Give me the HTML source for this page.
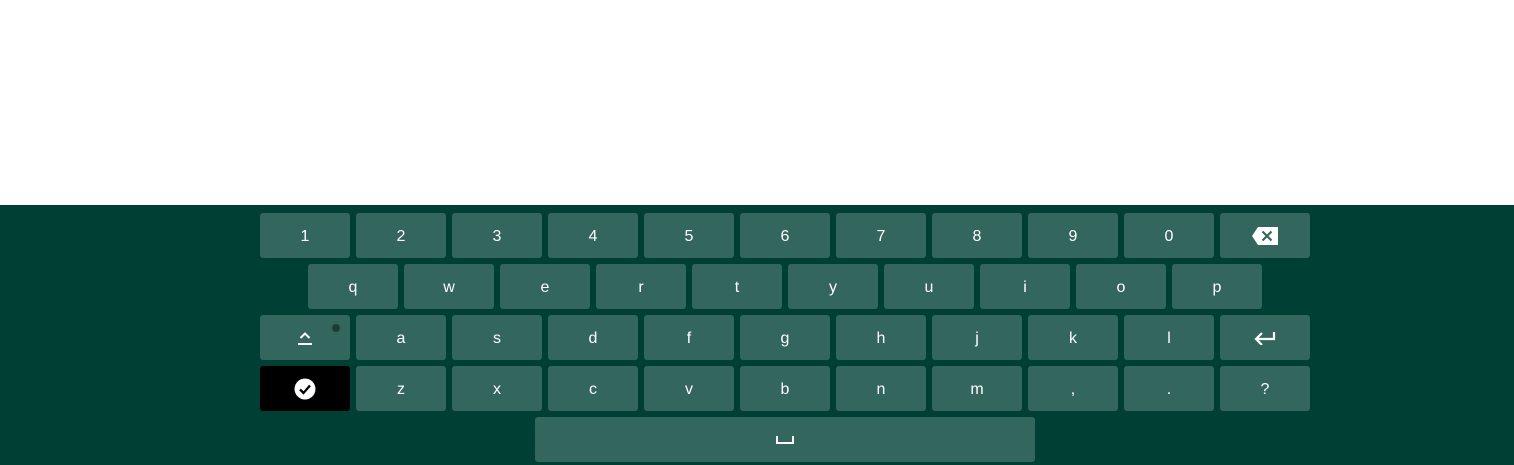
<html><head><style>
body{margin:0;width:1514px;height:465px;background:#fff;position:relative;overflow:hidden;font-family:"Liberation Sans",sans-serif}
#kb{position:absolute;left:0;top:205px;width:1514px;height:260px;background:#003f34}
.k{position:absolute;width:90px;height:45px;box-sizing:border-box;padding-top:2px;background:#33665c;border-radius:3px;color:#fff;font-size:16px;display:flex;align-items:center;justify-content:center}
</style></head><body><div id="kb"></div>
<script>
const rows=[[213,260,"1234567890".split("")],[264,308,"qwertyuiop".split("")],[315,356,"asdfghjkl".split("")],[366,356,"zxcvbnm,.?".split("")]];
let h="";
for(const [y,x0,ks] of rows)ks.forEach((c,i)=>{h+=`<div class="k" style="left:${x0+96*i}px;top:${y}px">${c}</div>`});
document.write(h);
</script>
<div class="k" style="left:1220px;top:213px;padding-top:0"><svg width="26" height="18" viewBox="0 0 26 18"><path d="M6 0H26V18H6L0 9Z" fill="#fff"/><path d="M10.5 4.5l9 9M19.5 4.5l-9 9" stroke="#33665c" stroke-width="2.2"/></svg></div>
<div class="k" style="left:260px;top:315px;padding-top:0"><svg width="16" height="16" viewBox="0 0 16 16"><path d="M3.5 8L8 3.5l4.5 4.5" fill="none" stroke="#fff" stroke-width="2"/><path d="M1 14h14" stroke="#fff" stroke-width="2"/></svg><div style="position:absolute;left:72px;top:9px;width:8px;height:8px;border-radius:50%;background:#1d3a33"></div></div>
<div class="k" style="left:1220px;top:315px;padding-top:0"><svg width="22" height="14" viewBox="0 0 22 14"><path d="M20 1v7H3" fill="none" stroke="#fff" stroke-width="2.2"/><path d="M8 2L2 8l6 6" fill="none" stroke="#fff" stroke-width="2.2"/></svg></div>
<div class="k" style="left:260px;top:366px;background:#000;padding-top:0"><svg width="22" height="22" viewBox="0 0 22 22"><circle cx="11" cy="11" r="10.5" fill="#fff"/><path d="M6 11.5l3.5 3.5L16 7.5" fill="none" stroke="#000" stroke-width="2.3"/></svg></div>
<div class="k" style="left:535px;top:417px;width:500px;padding-top:0"><svg width="18" height="8" viewBox="0 0 18 8"><path d="M1 0v7h16V0" fill="none" stroke="#fff" stroke-width="2"/></svg></div>
</body></html>
